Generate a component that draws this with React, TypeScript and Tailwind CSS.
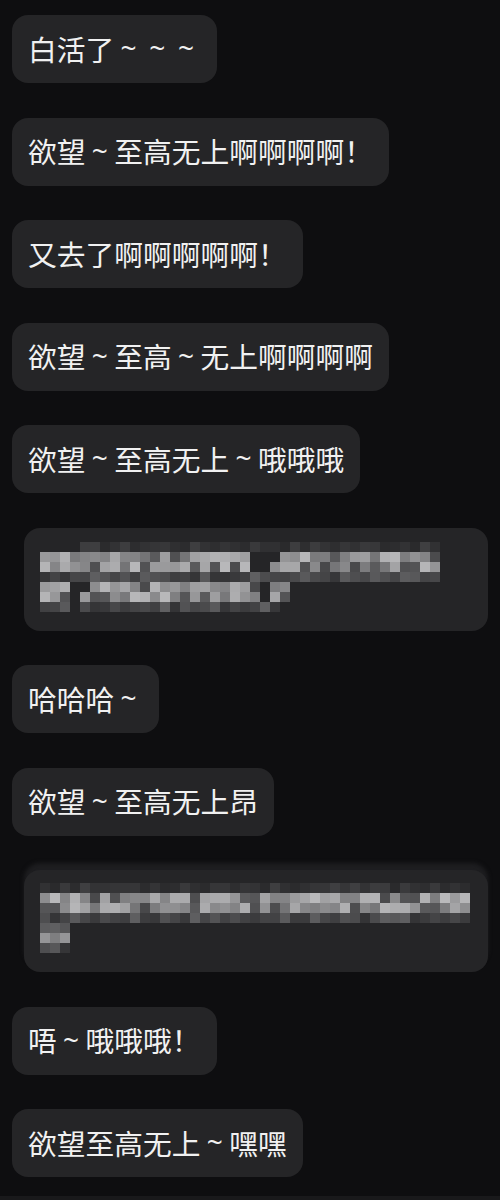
import React from "react";

type RowSpec = { from: number; to: number; kind: "bright" | "mid" | "faint"; gaps?: number[] };

function makeRand(seed: number) {
  let s = seed;
  return () => {
    s = (s * 9301 + 49297) % 233280;
    return s / 233280;
  };
}

function PixelBlock({ rows, seed }: { rows: RowSpec[]; seed: number }) {
  const rand = makeRand(seed);
  return (
    <div className="flex flex-col">
      {rows.map((r, ri) => {
        const cells = [];
        for (let c = 0; c < r.to; c++) {
          let color = "transparent";
          if (c >= r.from && !(r.gaps && r.gaps.includes(c))) {
            const v = rand();
            let g = 0;
            if (r.kind === "bright") g = v < 0.2 ? 0x48 + Math.floor(v * 100) : 0x62 + Math.floor(v * 0x58);
            else if (r.kind === "mid") g = 0x34 + Math.floor(v * 0x2c);
            else g = 0x2a + Math.floor(v * 0x16);
            const h = g.toString(16).padStart(2, "0");
            color = `#${h}${h}${(g + 2).toString(16).padStart(2, "0")}`;
          }
          cells.push(<div key={c} className="w-[10px] h-[10px]" style={{ backgroundColor: color }} />);
        }
        return (
          <div key={ri} className="flex">
            {cells}
          </div>
        );
      })}
    </div>
  );
}

function Bubble({ text }: { text: string }) {
  const parts = Array.from(text);
  return (
    <div className="h-[68px] w-fit flex items-center px-4 rounded-[16px] bg-[#252527] text-[#f1f1f1] text-[28.75px] leading-none whitespace-nowrap">
      {parts.map((ch, i) =>
        ch === "～" ? (
          <span
            key={i}
            className="inline-block w-[28.75px] text-center text-[28px] relative top-[-2px]"
            style={{ fontFamily: '"Noto Sans", sans-serif' }}
          >
            ~
          </span>
        ) : (
          <span key={i}>{ch}</span>
        )
      )}
    </div>
  );
}

export default function App() {
  const rows1: RowSpec[] = [
    { from: 0, to: 40, kind: "faint", gaps: [0, 1, 2, 3] },
    { from: 0, to: 40, kind: "bright", gaps: [21, 22, 23] },
    { from: 0, to: 40, kind: "bright", gaps: [21, 22] },
    { from: 0, to: 40, kind: "mid" },
    { from: 0, to: 25, kind: "bright", gaps: [3, 4, 22] },
    { from: 0, to: 25, kind: "bright", gaps: [3, 22] },
    { from: 0, to: 24, kind: "mid", gaps: [3] },
  ];
  const rows2: RowSpec[] = [
    { from: 0, to: 43, kind: "faint" },
    { from: 0, to: 43, kind: "bright" },
    { from: 0, to: 43, kind: "bright" },
    { from: 0, to: 43, kind: "mid" },
    { from: 0, to: 3, kind: "mid" },
    { from: 0, to: 3, kind: "bright" },
    { from: 0, to: 3, kind: "mid" },
  ];
  return (
    <div
      className="w-[500px] h-[1200px] bg-[#0e0e10] flex flex-col overflow-hidden"
      style={{ fontFamily: '"Noto Sans CJK SC", "Noto Sans", sans-serif' }}
    >
      <div className="flex-1 flex flex-col items-start gap-[34.5px] pt-[15px] pl-[12px]">
        <Bubble text="白活了～～～" />
        <Bubble text="欲望～至高无上啊啊啊啊！" />
        <Bubble text="又去了啊啊啊啊啊！" />
        <Bubble text="欲望～至高～无上啊啊啊啊" />
        <Bubble text="欲望～至高无上～哦哦哦" />
        <div className="ml-[12px] w-[464px] h-[103px] rounded-[16px] bg-[#252527] pt-[14px] pl-[16px]">
          <PixelBlock rows={rows1} seed={17} />
        </div>
        <Bubble text="哈哈哈～" />
        <Bubble text="欲望～至高无上昂" />
        <div className="ml-[12px] w-[464px] h-[102px] rounded-[16px] bg-[#252527] pt-[13px] pl-[16px] shadow-[0_-7px_4px_rgba(34,34,36,0.8)]">
          <PixelBlock rows={rows2} seed={53} />
        </div>
        <Bubble text="唔～哦哦哦！" />
        <Bubble text="欲望至高无上～嘿嘿" />
      </div>
      <div className="h-[4px] bg-[#19191b]" />
    </div>
  );
}
